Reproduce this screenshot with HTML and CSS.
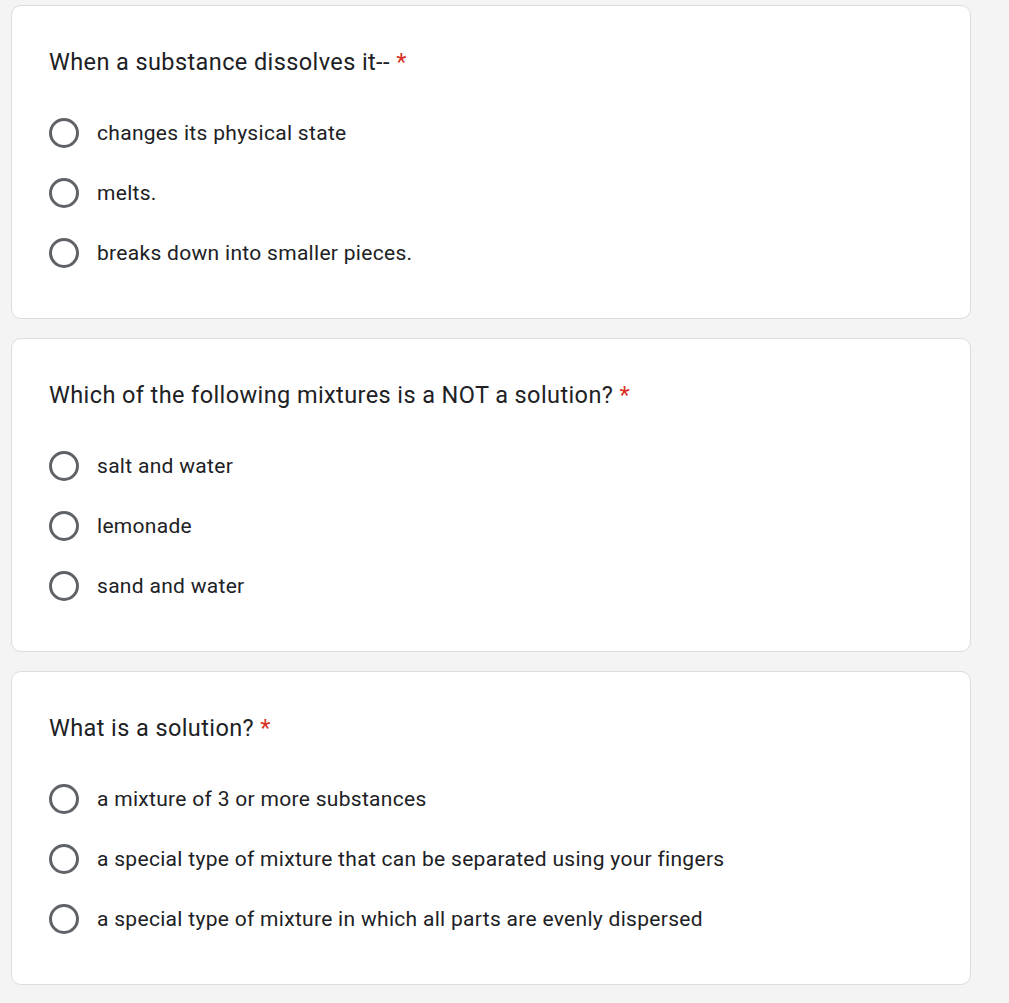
FILE: index.html
```html
<!DOCTYPE html>
<html>
<head>
<meta charset="utf-8">
<link rel="stylesheet" href="styles.css">
</head>
<body>
<div class="page">
  <div class="card">
    <div class="title">When a substance dissolves it-- <span class="req">*</span></div>
    <div class="options">
      <div class="opt"><span class="radio"></span><span class="label">changes its physical state</span></div>
      <div class="opt"><span class="radio"></span><span class="label">melts.</span></div>
      <div class="opt"><span class="radio"></span><span class="label">breaks down into smaller pieces.</span></div>
    </div>
  </div>
  <div class="card">
    <div class="title">Which of the following mixtures is a NOT a solution? <span class="req">*</span></div>
    <div class="options">
      <div class="opt"><span class="radio"></span><span class="label">salt and water</span></div>
      <div class="opt"><span class="radio"></span><span class="label">lemonade</span></div>
      <div class="opt"><span class="radio"></span><span class="label">sand and water</span></div>
    </div>
  </div>
  <div class="card">
    <div class="title">What is a solution? <span class="req">*</span></div>
    <div class="options">
      <div class="opt"><span class="radio"></span><span class="label">a mixture of 3 or more substances</span></div>
      <div class="opt"><span class="radio"></span><span class="label">a special type of mixture that can be separated using your fingers</span></div>
      <div class="opt"><span class="radio"></span><span class="label">a special type of mixture in which all parts are evenly dispersed</span></div>
    </div>
  </div>
</div>
</body>
</html>
```
FILE: styles.css
```css
html, body {
  margin: 0;
  padding: 0;
  background: #f4f4f4;
}
.page {
  display: flex;
  flex-direction: column;
  gap: 19px;
  padding: 5px 0 0 11px;
}
.card {
  width: 960px;
  box-sizing: border-box;
  background: #fff;
  border: 1px solid #dadce0;
  border-radius: 10px;
  padding: 37px 37px 35px 37px;
  color: #202124;
}
.title {
  font-family: Roboto, "Liberation Sans", sans-serif;
  font-size: 23.5px;
  line-height: 38px;
  height: 36px;
  letter-spacing: 0.4px;
  color: #202124;
}
.req {
  color: #d93025;
}
.options {
  margin-top: 24px;
  display: flex;
  flex-direction: column;
}
.opt {
  height: 60px;
  display: flex;
  align-items: center;
  gap: 18px;
}
.radio {
  width: 30px;
  height: 30px;
  box-sizing: border-box;
  border: 3px solid #5f6368;
  border-radius: 50%;
  flex: none;
}
.label {
  font-family: Roboto, "Liberation Sans", sans-serif;
  font-size: 21px;
  letter-spacing: 0.3px;
  color: #202124;
}
```
